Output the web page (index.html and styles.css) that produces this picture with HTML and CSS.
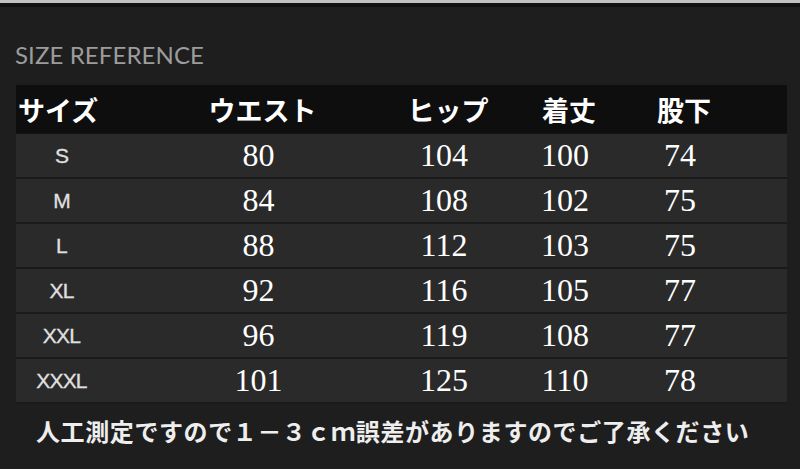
FILE: index.html
```html
<!DOCTYPE html>
<html lang="ja">
<head>
<meta charset="utf-8">
<title>SIZE REFERENCE</title>
<link rel="stylesheet" href="styles.css">
</head>
<body>
<div class="page">
  <div class="topline"></div>
  <h1 class="title">SIZE REFERENCE</h1>
  <div class="table">
    <div class="row head">
      <div class="cell c1">サイズ</div>
      <div class="cell c2">ウエスト</div>
      <div class="cell c3">ヒップ</div>
      <div class="cell c4">着丈</div>
      <div class="cell c5">股下</div>
    </div>
    <div class="row">
      <div class="cell c1 size">S</div>
      <div class="cell c2 num">80</div>
      <div class="cell c3 num">104</div>
      <div class="cell c4 num">100</div>
      <div class="cell c5 num">74</div>
    </div>
    <div class="row">
      <div class="cell c1 size">M</div>
      <div class="cell c2 num">84</div>
      <div class="cell c3 num">108</div>
      <div class="cell c4 num">102</div>
      <div class="cell c5 num">75</div>
    </div>
    <div class="row">
      <div class="cell c1 size">L</div>
      <div class="cell c2 num">88</div>
      <div class="cell c3 num">112</div>
      <div class="cell c4 num">103</div>
      <div class="cell c5 num">75</div>
    </div>
    <div class="row">
      <div class="cell c1 size">XL</div>
      <div class="cell c2 num">92</div>
      <div class="cell c3 num">116</div>
      <div class="cell c4 num">105</div>
      <div class="cell c5 num">77</div>
    </div>
    <div class="row">
      <div class="cell c1 size">XXL</div>
      <div class="cell c2 num">96</div>
      <div class="cell c3 num">119</div>
      <div class="cell c4 num">108</div>
      <div class="cell c5 num">77</div>
    </div>
    <div class="row">
      <div class="cell c1 size">XXXL</div>
      <div class="cell c2 num">101</div>
      <div class="cell c3 num">125</div>
      <div class="cell c4 num">110</div>
      <div class="cell c5 num">78</div>
    </div>
  </div>
  <p class="note">人工測定ですので１－３ｃｍ誤差がありますのでご了承ください</p>
</div>
</body>
</html>
```
FILE: styles.css
```css
html, body {
  margin: 0;
  padding: 0;
  background: #1e1e1e;
}
.page {
  width: 800px;
  height: 469px;
  overflow: hidden;
  background: #1e1e1e;
}
.topline {
  height: 3px;
  background: #c2c2c2;
  border-bottom: 4px solid #121212;
}
.title {
  margin: 34px 0 0 15px;
  font-family: Lato, "Open Sans", sans-serif;
  font-weight: 400;
  font-size: 24px;
  line-height: 28px;
  color: #9c9c9c;
  letter-spacing: 0.1px;
}
.table {
  margin: 16px 13px 0 16px;
  background: #1b1b1b;
}
.row {
  display: grid;
  grid-template-columns: 91px 303px 68px 174px 56px 1fr;
  height: 43px;
  background: #2a2a2a;
  border-bottom: 2px solid #1a1a1a;
}
.row.head {
  height: 48px;
  background: #0e0e0e;
  border-bottom: 1px solid #151515;
}
.cell {
  display: flex;
  align-items: center;
  justify-content: center;
  white-space: nowrap;
}
.head .cell {
  font-family: "Noto Sans CJK JP", sans-serif;
  font-weight: 700;
  font-size: 27px;
  color: #ffffff;
  padding-left: 8px;
}
.head .c1 {
  justify-content: flex-start;
  padding-left: 2px;
}
.size {
  font-family: "Liberation Sans", Arial, sans-serif;
  font-size: 21px;
  color: #e0e0e0;
  letter-spacing: -0.8px;
  -webkit-text-stroke: 0.3px #e0e0e0;
}
.num {
  font-family: "Liberation Serif", "Times New Roman", serif;
  font-size: 32px;
  color: #ffffff;
}
.note {
  margin: 12px 0 0 36px;
  font-family: "Noto Sans CJK JP", sans-serif;
  font-weight: 700;
  font-size: 24px;
  line-height: 30px;
  letter-spacing: 0.6px;
  color: #eeeeee;
}
```
